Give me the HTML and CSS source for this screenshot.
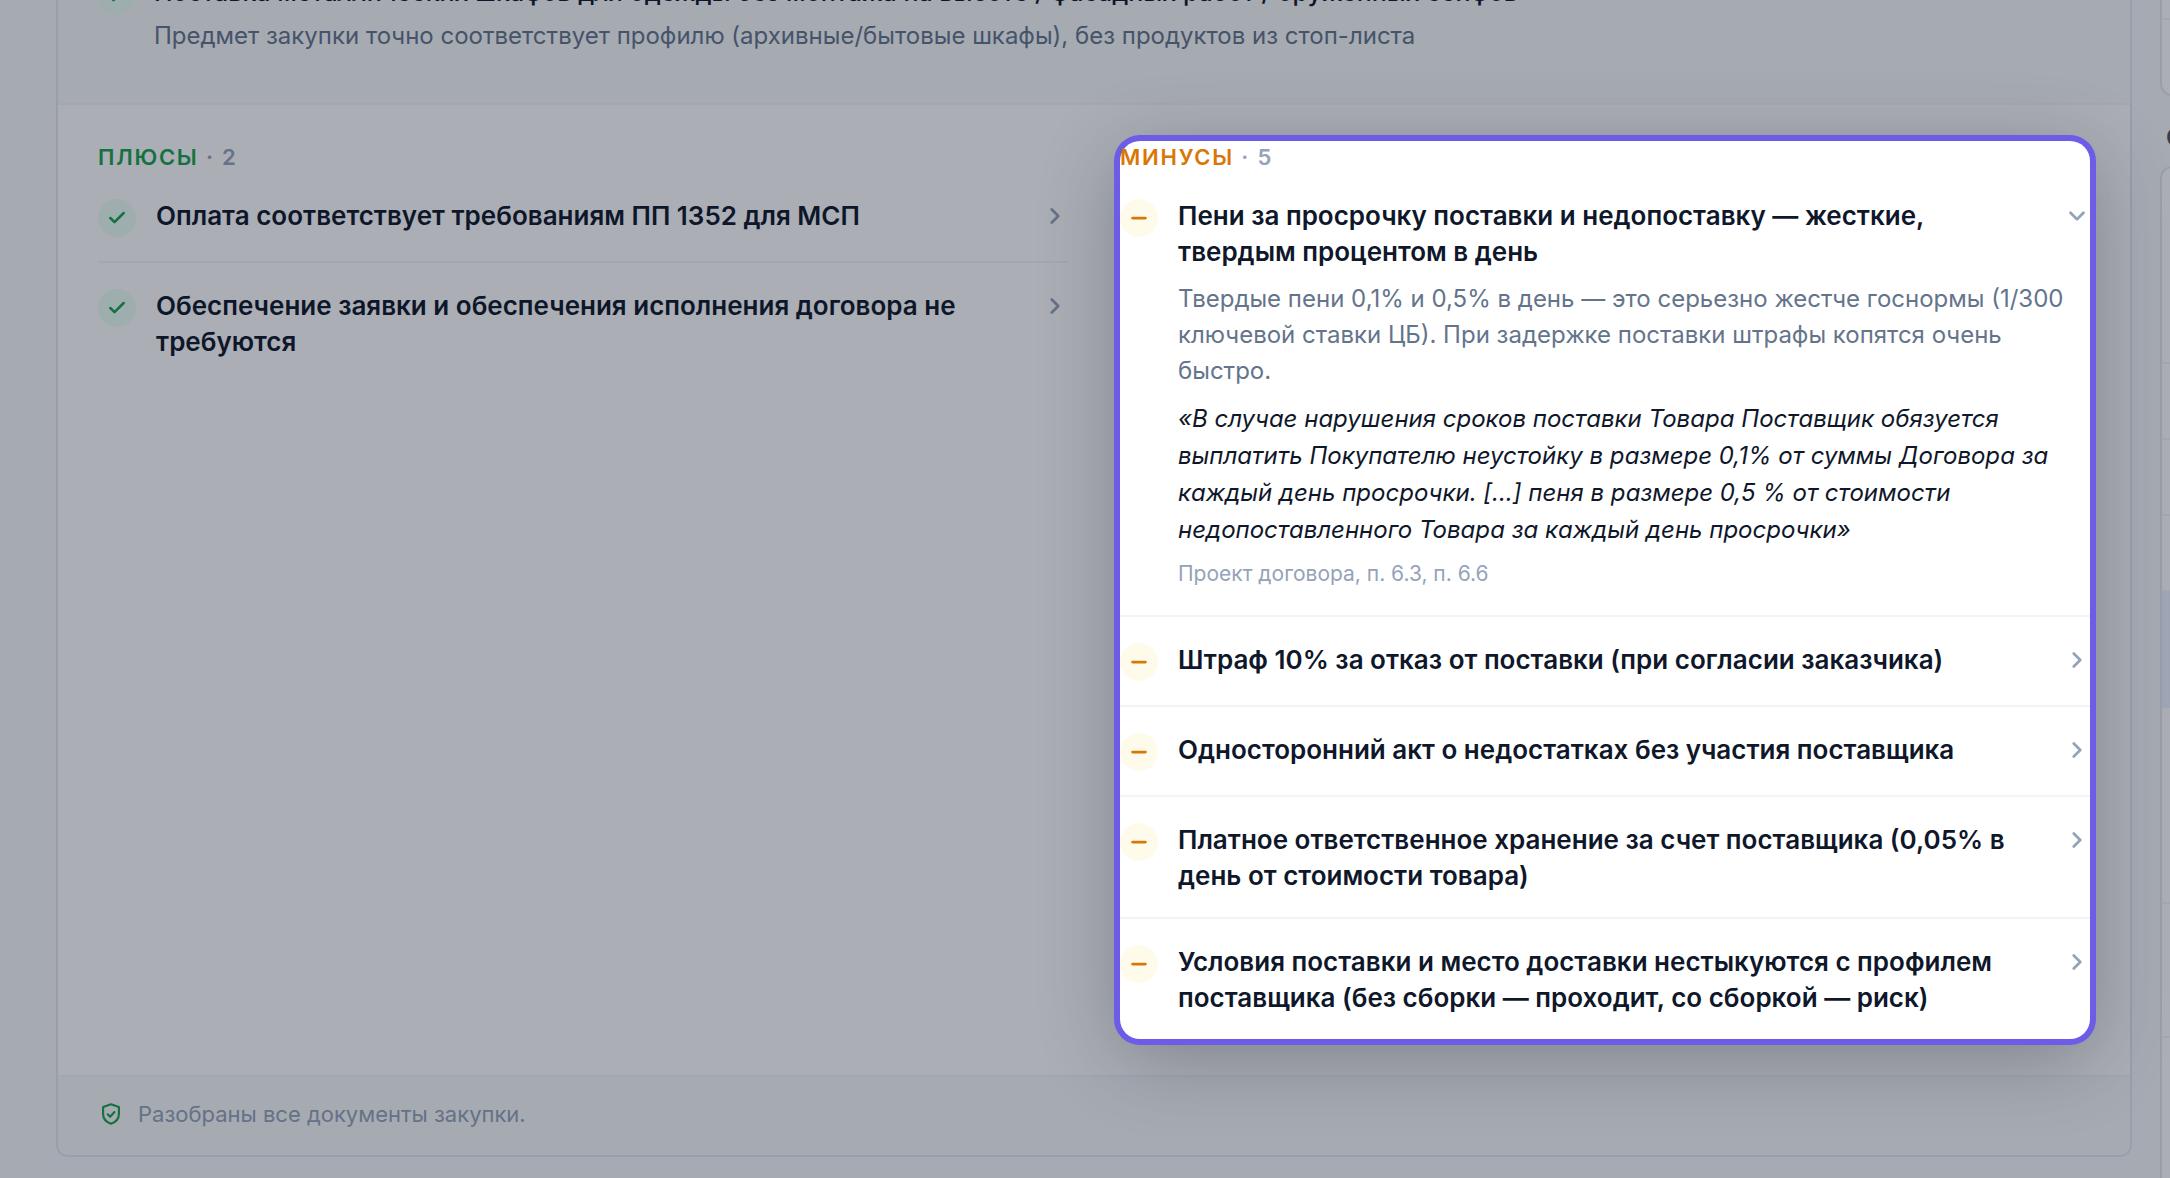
FILE: index.html
```html
<!DOCTYPE html>
<html lang="ru">
<head>
  <meta charset="UTF-8">
  <meta name="viewport" content="width=device-width, initial-scale=1.0">
  <title>Анализ закупки</title>
  <link rel="stylesheet" href="styles.css">
</head>
<body>
  <!-- shared icons -->
  <svg class="sprite" aria-hidden="true">
    <symbol id="icon-check" viewBox="0 0 24 24"><path d="M20 6 9 17l-5-5"/></symbol>
    <symbol id="icon-minus" viewBox="0 0 24 24"><path d="M5 12h14"/></symbol>
    <symbol id="icon-right" viewBox="0 0 24 24"><path d="m9 18 6-6-6-6"/></symbol>
    <symbol id="icon-down" viewBox="0 0 24 24"><path d="m6 9 6 6 6-6"/></symbol>
    <symbol id="icon-shield" viewBox="0 0 24 24"><path d="M12 3 19.300 5.500v6.500c0 4.500-3 7.500-7.300 9-4.300-1.500-7.300-4.500-7.300-9V5.500z"/><path d="m9 12.300 2.200 2.200 4-4.300"/></symbol>
  </svg>

  <div class="layout">
    <main class="card">
      <section class="match">
        <span class="badge badge-plus badge-small"><svg class="icon"><use href="#icon-check"/></svg></span>
        <div class="match-body">
          <h3 class="match-title">Поставка металлических шкафов для одежды без монтажа на высоте / фасадных работ / оружейных сейфов</h3>
          <p class="text">Предмет закупки точно соответствует профилю (архивные/бытовые шкафы), без продуктов из стоп-листа</p>
        </div>
      </section>

      <div class="columns">
        <section class="column">
          <h2 class="heading heading-plus">Плюсы <span class="count">· 2</span></h2>
          <div class="item">
            <button type="button" class="item-head" aria-expanded="false">
              <span class="badge badge-plus"><svg class="icon"><use href="#icon-check"/></svg></span>
              <span class="item-title">Оплата соответствует требованиям ПП 1352 для МСП</span>
              <svg class="icon chevron"><use href="#icon-right"/></svg>
            </button>
          </div>
          <div class="item">
            <button type="button" class="item-head" aria-expanded="false">
              <span class="badge badge-plus"><svg class="icon"><use href="#icon-check"/></svg></span>
              <span class="item-title">Обеспечение заявки и обеспечения исполнения договора не требуются</span>
              <svg class="icon chevron"><use href="#icon-right"/></svg>
            </button>
          </div>
        </section>

        <section class="column spotlight">
          <h2 class="heading heading-minus">Минусы <span class="count">· 5</span></h2>
          <div class="item">
            <button type="button" class="item-head" aria-expanded="true">
              <span class="badge badge-minus"><svg class="icon"><use href="#icon-minus"/></svg></span>
              <span class="item-title">Пени за просрочку поставки и недопоставку — жесткие, твердым процентом в день</span>
              <svg class="icon chevron"><use href="#icon-down"/></svg>
            </button>
            <div class="item-body">
              <p class="text">Твердые пени 0,1% и 0,5% в день — это серьезно жестче госнормы (1/300 ключевой ставки ЦБ). При задержке поставки штрафы копятся очень быстро.</p>
              <blockquote class="quote">«В случае нарушения сроков поставки Товара Поставщик обязуется выплатить Покупателю неустойку в размере 0,1% от суммы Договора за каждый день просрочки. [...] пеня в размере 0,5 % от стоимости недопоставленного Товара за каждый день просрочки»</blockquote>
              <p class="source">Проект договора, п. 6.3, п. 6.6</p>
            </div>
          </div>
          <div class="item">
            <button type="button" class="item-head" aria-expanded="false">
              <span class="badge badge-minus"><svg class="icon"><use href="#icon-minus"/></svg></span>
              <span class="item-title">Штраф 10% за отказ от поставки (при согласии заказчика)</span>
              <svg class="icon chevron"><use href="#icon-right"/></svg>
            </button>
          </div>
          <div class="item">
            <button type="button" class="item-head" aria-expanded="false">
              <span class="badge badge-minus"><svg class="icon"><use href="#icon-minus"/></svg></span>
              <span class="item-title">Односторонний акт о недостатках без участия поставщика</span>
              <svg class="icon chevron"><use href="#icon-right"/></svg>
            </button>
          </div>
          <div class="item">
            <button type="button" class="item-head" aria-expanded="false">
              <span class="badge badge-minus"><svg class="icon"><use href="#icon-minus"/></svg></span>
              <span class="item-title">Платное ответственное хранение за счет поставщика (0,05% в день от стоимости товара)</span>
              <svg class="icon chevron"><use href="#icon-right"/></svg>
            </button>
          </div>
          <div class="item">
            <button type="button" class="item-head" aria-expanded="false">
              <span class="badge badge-minus"><svg class="icon"><use href="#icon-minus"/></svg></span>
              <span class="item-title">Условия поставки и место доставки нестыкуются с профилем поставщика (без сборки — проходит, со сборкой — риск)</span>
              <svg class="icon chevron"><use href="#icon-right"/></svg>
            </button>
          </div>
        </section>
      </div>

      <footer class="card-footer">
        <svg class="icon shield"><use href="#icon-shield"/></svg>
        <span>Разобраны все документы закупки.</span>
      </footer>
    </main>

    <aside class="sidebar">
      <div class="panel panel-top">
        <div class="panel-row row-first"></div>
        <div class="panel-row row-small"></div>
      </div>
      <h2 class="sidebar-title">О</h2>
      <div class="panel">
        <div class="panel-row row-large"></div>
        <div class="panel-row row-small"></div>
        <div class="panel-row row-small"></div>
        <div class="panel-row row-small"></div>
        <div class="panel-row row-active"></div>
        <div class="panel-row row-large"></div>
        <div class="panel-row row-medium"></div>
        <div class="panel-row row-large"></div>
      </div>
    </aside>
  </div>
</body>
</html>
```
FILE: styles.css
```css
* {
  box-sizing: border-box;
}

body {
  margin: 0;
  height: 100vh;
  overflow: hidden;
  background-color: #f8fafc;
  color: #0f172a;
  font-family: Inter, "Noto Sans", sans-serif;
  font-size: 24px;
  line-height: 36px;
}

h2, h3, p, blockquote {
  margin: 0;
}

.sprite {
  display: none;
}

.icon {
  width: 24px;
  height: 24px;
  flex-shrink: 0;
  fill: none;
  stroke: currentColor;
  stroke-width: 3;
  stroke-linecap: round;
  stroke-linejoin: round;
}

/* The page is scrolled, the sidebar runs past the right edge */
.layout {
  display: flex;
  align-items: flex-start;
  gap: 28px;
  margin: -24px -640px 0 56px;
}

.card {
  flex: 1;
  background-color: #fff;
  border: 2px solid #e2e8f0;
  border-top: none;
  border-radius: 0 0 12px 12px;
}

.match {
  display: flex;
  gap: 20px;
  padding: 0 40px 49px;
  background-color: #f7fafa;
  border-bottom: 2px solid #f1f5f9;
}

.match-body {
  display: grid;
  gap: 10px;
}

.match-title {
  font-size: 25px;
  line-height: 32px;
  font-weight: 500;
}

.columns {
  display: grid;
  grid-template-columns: 1fr 1fr;
  gap: 52px;
  padding: 36px 40px;
}

.heading {
  font-size: 22px;
  line-height: 32px;
  font-weight: 600;
  letter-spacing: 0.08em;
  text-transform: uppercase;
}

.heading-plus {
  color: #16a34a;
}

.heading-minus {
  color: #d97706;
}

.count {
  color: #94a3b8;
}

/* Dims everything around the column */
.spotlight {
  position: relative;
  z-index: 1;
  border-radius: 20px;
  background-color: #fff;
  box-shadow:
    0 0 0 6px #6c5ce7,
    0 16px 80px rgba(15, 23, 42, 0.3),
    0 0 0 9999px rgba(15, 23, 42, 0.35);
}

.item {
  padding: 24px 0;
}

.item + .item {
  border-top: 2px solid #f1f5f9;
}

.item-head {
  display: flex;
  align-items: flex-start;
  gap: 20px;
  width: 100%;
  padding: 0;
  border: none;
  background: none;
  color: inherit;
  font: inherit;
  text-align: left;
  cursor: pointer;
}

.item-title {
  flex: 1;
  padding-top: 1px;
  margin-bottom: -1px;
  font-size: 26px;
  line-height: 36px;
  font-weight: 600;
}

.badge {
  display: flex;
  align-items: center;
  justify-content: center;
  flex-shrink: 0;
  width: 38px;
  height: 38px;
  margin-top: 2px;
  border-radius: 50%;
}

.badge-small {
  width: 36px;
  height: 36px;
}

.badge .icon {
  width: 22px;
  height: 22px;
}

.badge-plus .icon {
  width: 20px;
  height: 20px;
}

.badge-plus {
  background-color: #ecfdf3;
  color: #16a34a;
}

.badge-minus {
  background-color: #fffbeb;
  color: #d97706;
}

.chevron {
  width: 26px;
  height: 26px;
  margin-top: 6px;
  stroke-width: 2.5;
  color: #94a3b8;
}

.item-body {
  padding: 12px 24px 0 58px;
}

.text {
  color: #64748b;
}

.quote {
  margin: 11px 0 9px;
  line-height: 37px;
  font-style: italic;
}

.source {
  font-size: 21px;
  line-height: 34px;
  color: #94a3b8;
}

.card-footer {
  display: flex;
  align-items: center;
  gap: 14px;
  padding: 20px 40px 24px;
  border-top: 2px solid #f1f5f9;
  border-radius: 0 0 12px 12px;
  background-color: #f7fafa;
  color: #94a3b8;
  font-size: 22px;
  line-height: 34px;
}

.shield {
  width: 26px;
  height: 26px;
  stroke-width: 2;
  color: #16a34a;
}

.sidebar {
  width: 650px;
}

.panel {
  background-color: #fff;
  border: 2px solid #e2e8f0;
  border-radius: 12px;
}

.panel-top {
  border-top: none;
  border-radius: 0 0 12px 12px;
}

.panel-row {
  border-top: 2px solid #f1f5f9;
}

.panel-row:first-child,
.row-active + .panel-row {
  border-top: none;
}

.row-first {
  height: 42px;
}

.row-small {
  height: 76px;
}

.row-medium {
  height: 134px;
}

.row-large {
  height: 194px;
}

.row-active {
  height: 118px;
  background-color: #eef2ff;
}

.sidebar-title {
  padding: 24px 6px 10px;
  font-size: 24px;
  line-height: 36px;
  font-weight: 600;
  color: #475569;
}
```
